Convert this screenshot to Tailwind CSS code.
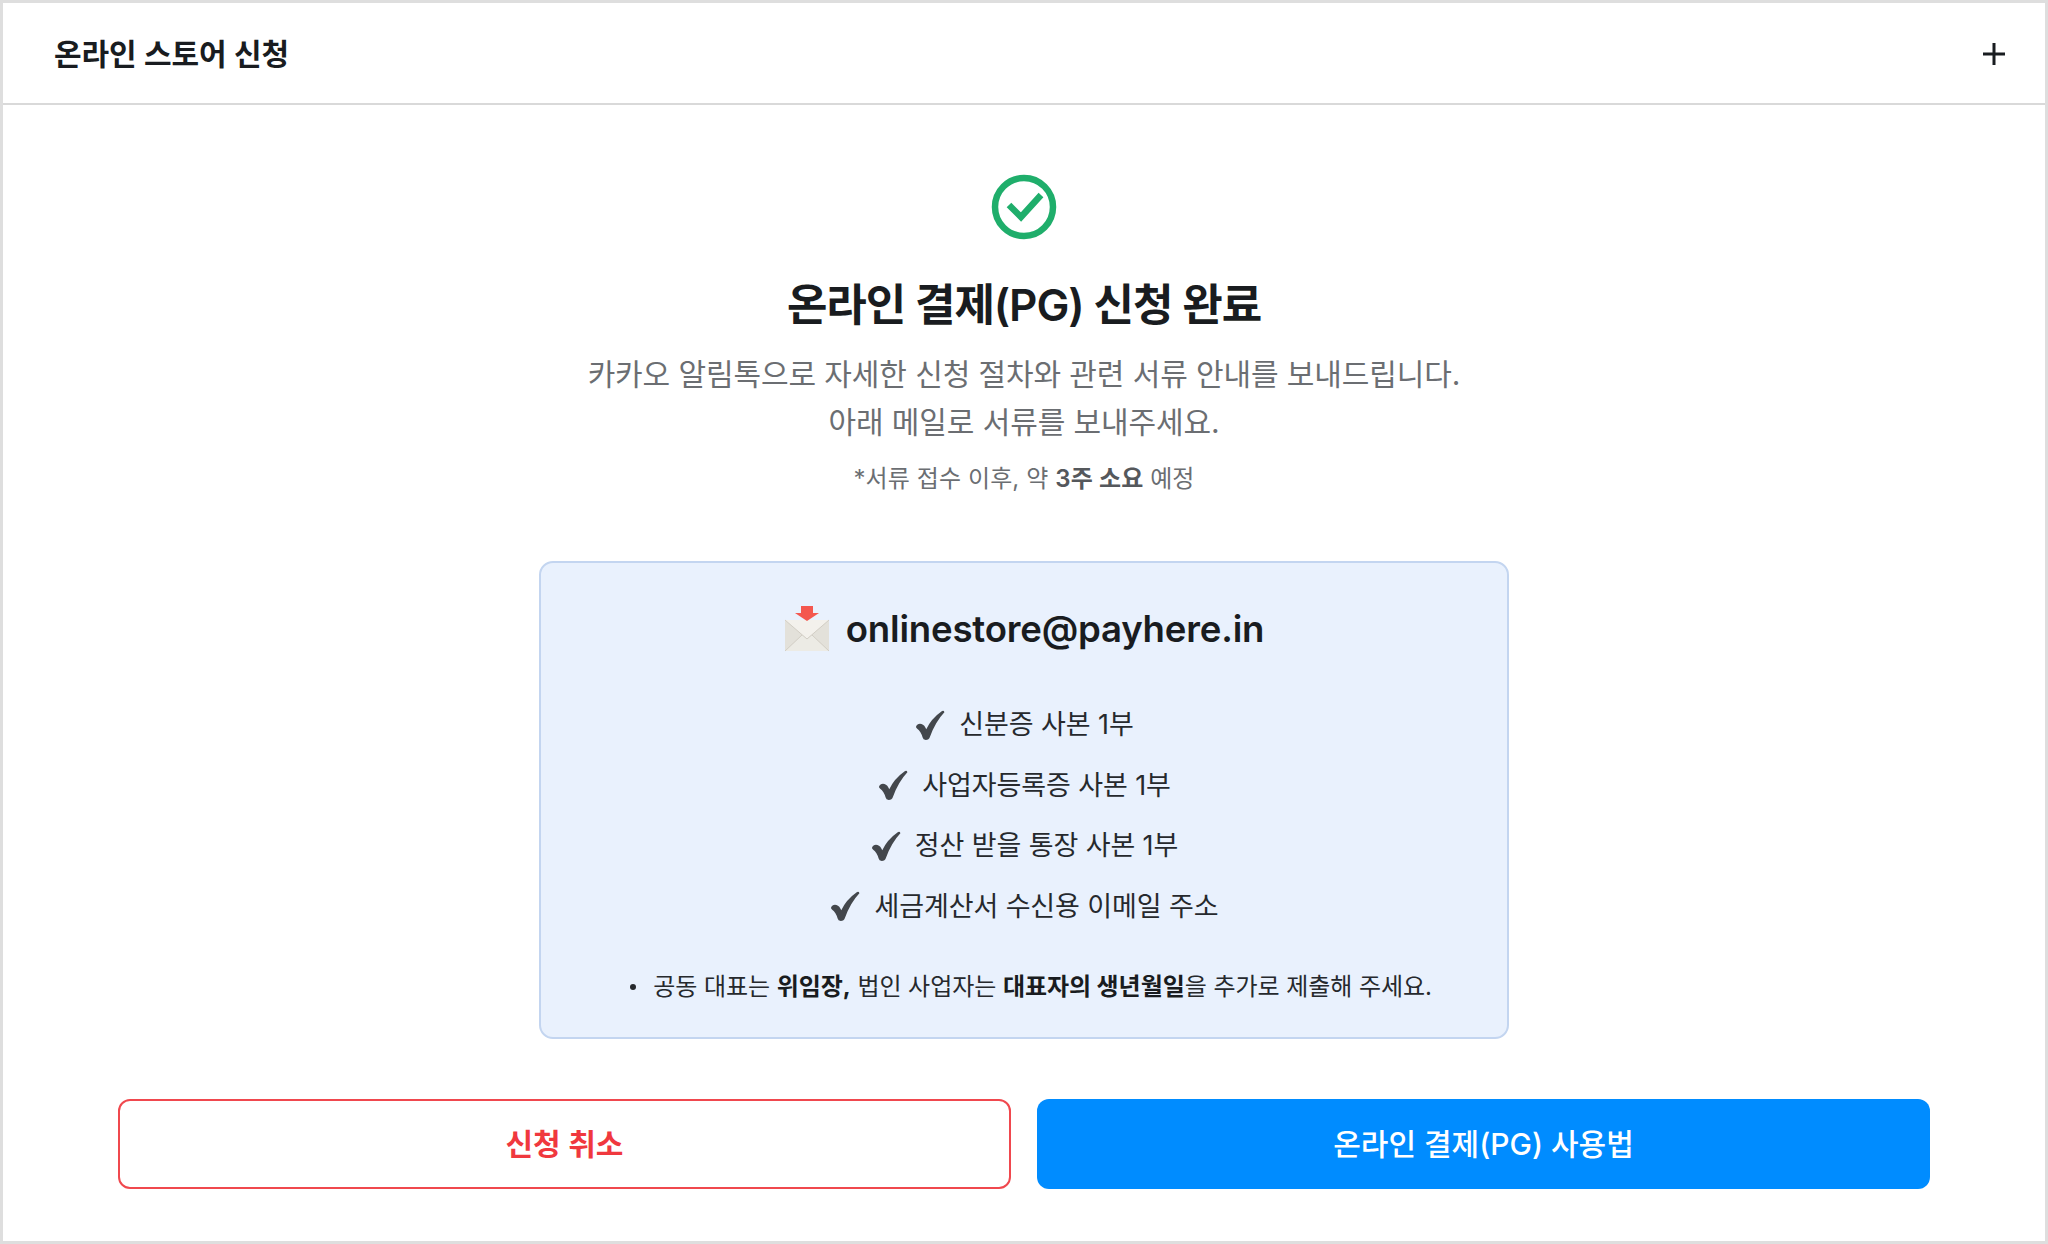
<!DOCTYPE html>
<html lang="ko">
<head>
  <meta charset="UTF-8" />
  <title>온라인 스토어 신청</title>
  <script src="https://cdn.jsdelivr.net/npm/@tailwindcss/browser@4"></script>
</head>
<body class="bg-white font-['Inter','Noto_Sans_CJK_KR',sans-serif] text-[#191c20]">
  <div class="w-[2048px] h-[1244px] border-[3px] border-[#dedede] flex flex-col">
    <!-- header -->
    <div class="h-[102px] shrink-0 border-b-2 border-[#d9d9d9] flex items-center justify-between pt-[2px] pl-[51px] pr-[39px]">
      <h2 class="text-[30px] font-semibold tracking-[-0.1px]">온라인 스토어 신청</h2>
      <svg class="w-[24px] h-[24px]" viewBox="0 0 24 24" fill="none" stroke="#191c20" stroke-width="3"><path d="M1 12h22M12 1v22"/></svg>
    </div>

    <div class="flex-1 flex flex-col items-center pt-[69px]">
      <svg class="w-[66px] h-[66px]" viewBox="0 0 66 66" fill="none" stroke="#1fae6b"><circle cx="33" cy="33" r="29" stroke-width="6.500"/><path d="M18 31l12 12 20-22" stroke-width="6.500"/></svg>
      <h1 class="mt-[35px] text-[44px] leading-[60px] font-semibold tracking-[-1.1px]">온라인 결제(PG) 신청 완료</h1>
      <p class="mt-[15px] text-[30px] leading-[48px] text-[#6b6e72] text-center tracking-[-0.1px]">카카오 알림톡으로 자세한 신청 절차와 관련 서류 안내를 보내드립니다.<br />아래 메일로 서류를 보내주세요.</p>
      <p class="mt-[15px] text-[24px] leading-[36px] text-[#6b6e72] tracking-[0.1px]">*서류 접수 이후, 약 <b class="font-semibold text-[#55585c]">3주 소요</b> 예정</p>

      <!-- mail box -->
      <div class="mt-[64px] w-[970px] h-[478px] rounded-[14px] border-2 border-[#c3d5f0] bg-[#e9f1fd] flex flex-col items-center pt-[38px]">
        <div class="flex items-center gap-[16px] h-[56px]">
          <svg class="w-[46px] h-[46px]" viewBox="0 0 46 46">
            <rect x="1" y="14" width="44" height="31" fill="#e3e1da" />
            <path d="M1 14l22 19 22-19z" fill="#f3f1ec" />
            <path d="M1 45l17-16 5 4 5-4 17 16z" fill="#ecebe5" />
            <path d="M1 14l22 19 22-19M1 45l17-16M45 45L28 29" fill="none" stroke="#d2cec5" stroke-width="1" />
            <path d="M17 0h12v7h6L23 15 11 7h6z" fill="#f4574f" />
          </svg>
          <span class="text-[36.6px] font-semibold tracking-[-0.2px]">onlinestore@payhere.in</span>
        </div>
        <ul class="mt-[47px] flex flex-col items-center gap-[19.5px] text-[27px] leading-[41px] tracking-[-0.1px] text-[#26292d]">
          <li class="flex items-center gap-[13px]">
            <svg class="w-[32px] h-[32px]" viewBox="0 0 30 30" fill="#43474c"><path d="M2 16Q4 13 7 14Q10 15 11.500 19Q16 9 26 2Q28 1 28.500 3Q20 12 15 26Q14 29 11 29Q8.500 29 8 26.500Q6.500 21 3 18.500Q1.500 17.500 2 16z"/></svg>
            신분증 사본 1부
          </li>
          <li class="flex items-center gap-[13px]">
            <svg class="w-[32px] h-[32px]" viewBox="0 0 30 30" fill="#43474c"><path d="M2 16Q4 13 7 14Q10 15 11.500 19Q16 9 26 2Q28 1 28.500 3Q20 12 15 26Q14 29 11 29Q8.500 29 8 26.500Q6.500 21 3 18.500Q1.500 17.500 2 16z"/></svg>
            사업자등록증 사본 1부
          </li>
          <li class="flex items-center gap-[13px]">
            <svg class="w-[32px] h-[32px]" viewBox="0 0 30 30" fill="#43474c"><path d="M2 16Q4 13 7 14Q10 15 11.500 19Q16 9 26 2Q28 1 28.500 3Q20 12 15 26Q14 29 11 29Q8.500 29 8 26.500Q6.500 21 3 18.500Q1.500 17.500 2 16z"/></svg>
            정산 받을 통장 사본 1부
          </li>
          <li class="flex items-center gap-[13px]">
            <svg class="w-[32px] h-[32px]" viewBox="0 0 30 30" fill="#43474c"><path d="M2 16Q4 13 7 14Q10 15 11.500 19Q16 9 26 2Q28 1 28.500 3Q20 12 15 26Q14 29 11 29Q8.500 29 8 26.500Q6.500 21 3 18.500Q1.500 17.500 2 16z"/></svg>
            세금계산서 수신용 이메일 주소
          </li>
        </ul>
        <div class="mt-[42px] pl-[14px] flex items-center gap-[17px] text-[24px] leading-[36px] tracking-[-0.06px] text-[#26292d]">
          <span class="w-[6px] h-[6px] rounded-full bg-[#26292d]"></span>
          <p>공동 대표는 <b class="font-bold text-[#191c20]">위임장,</b> 법인 사업자는 <b class="font-bold text-[#191c20]">대표자의 생년월일</b>을 추가로 제출해 주세요.</p>
        </div>
      </div>

      <!-- buttons -->
      <div class="mt-[60px] w-[1812px] flex justify-between">
        <button class="w-[893px] h-[90px] rounded-[12px] border-2 border-[#f0484e] bg-white text-[#f0383e] text-[30px] font-semibold">신청 취소</button>
        <button class="w-[893px] h-[90px] rounded-[12px] bg-[#008cff] text-white text-[30px] font-medium">온라인 결제(PG) 사용법</button>
      </div>
    </div>
  </div>
</body>
</html>
